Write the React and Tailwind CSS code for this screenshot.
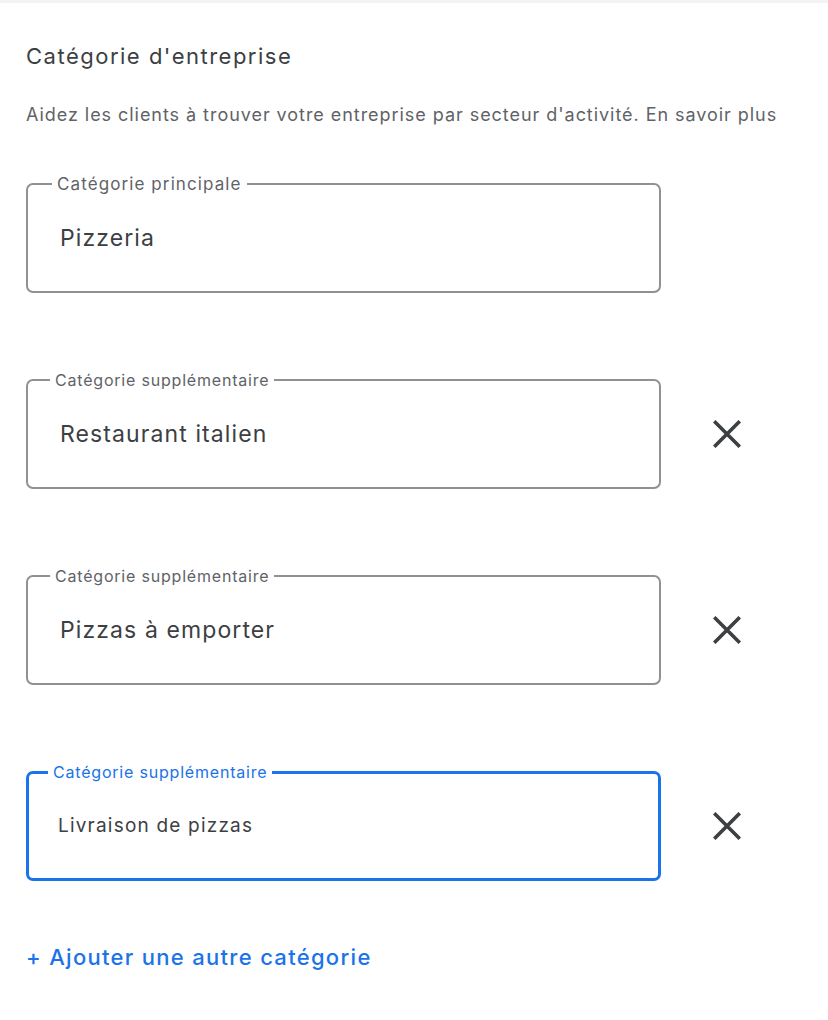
import React from 'react';

const fields = [
  { label: 'Catégorie principale', value: 'Pizzeria', removable: false, main: true },
  { label: 'Catégorie supplémentaire', value: 'Restaurant italien', removable: true },
  { label: 'Catégorie supplémentaire', value: 'Pizzas à emporter', removable: true },
  { label: 'Catégorie supplémentaire', value: 'Livraison de pizzas', removable: true, focused: true },
];

function CloseIcon() {
  return (
    <svg width="28" height="28" viewBox="0 0 28 28" fill="none" stroke="#3c4043" strokeWidth="3.6" strokeLinecap="square">
      <path d="M2.5 2.5l23 23M25.5 2.5l-23 23" />
    </svg>
  );
}

function labelClass(main, focused) {
  if (focused) return 'left-[19px] -top-[12px] text-[16px] tracking-[0.8px] text-[#1a73e8]';
  if (main) return 'left-[24px] -top-[11px] text-[17px] tracking-[1.1px] text-[#5f6368]';
  return 'left-[22px] -top-[11px] text-[16px] tracking-[0.8px] text-[#5f6368]';
}

function Field({ label, value, removable, focused, main }) {
  return (
    <div className="flex items-center">
      <div
        className={`relative w-[635px] h-[110px] rounded-[7px] flex items-center ${
          focused ? 'border-[3px] border-[#1a73e8]' : 'border-2 border-[#8e9297]'
        }`}
      >
        {/* notched label sitting on the top border */}
        <span className={`absolute px-[5px] bg-white leading-[20px] ${labelClass(main, focused)}`}>
          {label}
        </span>
        <span
          className={`text-[#3c4043] ${
            focused ? 'pl-[29px] text-[19px] tracking-[1.2px]' : 'pl-[32px] text-[23px] tracking-[1.1px]'
          }`}
        >
          {value}
        </span>
      </div>
      {removable && (
        <button className="ml-[52px] flex items-center justify-center">
          <CloseIcon />
        </button>
      )}
    </div>
  );
}

export default function App() {
  return (
    <div
      className="min-h-[1020px] bg-white border-t-[3px] border-[#f1f3f4]"
      style={{ fontFamily: 'Inter, Roboto, sans-serif' }}
    >
      <div className="px-[26px] pt-[38px]">
        <h2 className="text-[22px] tracking-[1.5px] text-[#3c4043] leading-[30px]">Catégorie d'entreprise</h2>
        <p className="mt-[32px] text-[18px] tracking-[0.95px] text-[#5f6368] leading-[24px]">
          Aidez les clients à trouver votre entreprise par secteur d'activité. En savoir plus
        </p>
        <div className="mt-[56px] flex flex-col gap-[86px]">
          {fields.map((f, i) => (
            <Field key={i} {...f} />
          ))}
        </div>
        <button className="mt-[61px] text-[22px] tracking-[1.3px] font-medium text-[#1a73e8] leading-[30px]">
          + Ajouter une autre catégorie
        </button>
      </div>
    </div>
  );
}
